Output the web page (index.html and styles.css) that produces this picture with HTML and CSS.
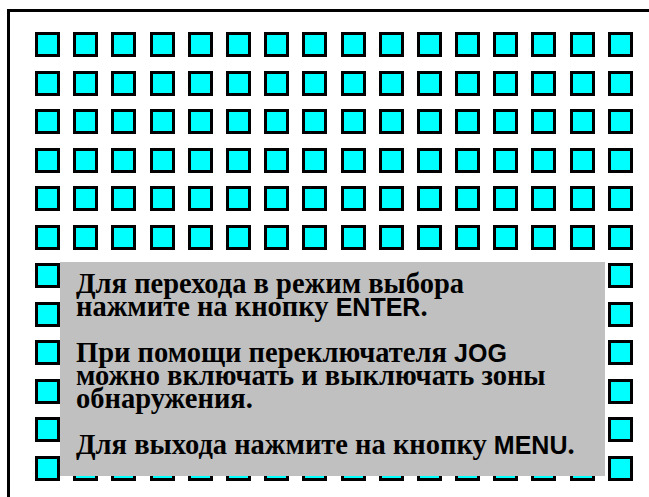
FILE: index.html
```html
<!DOCTYPE html>
<html lang="ru">
<head>
<meta charset="utf-8">
<title>Зоны обнаружения</title>
<link rel="stylesheet" href="styles.css">
</head>
<body>
<div class="frame">
  <div class="zones">
    <span class="zone"></span><span class="zone"></span><span class="zone"></span><span class="zone"></span><span class="zone"></span><span class="zone"></span><span class="zone"></span><span class="zone"></span><span class="zone"></span><span class="zone"></span><span class="zone"></span><span class="zone"></span><span class="zone"></span><span class="zone"></span><span class="zone"></span><span class="zone"></span>
    <span class="zone"></span><span class="zone"></span><span class="zone"></span><span class="zone"></span><span class="zone"></span><span class="zone"></span><span class="zone"></span><span class="zone"></span><span class="zone"></span><span class="zone"></span><span class="zone"></span><span class="zone"></span><span class="zone"></span><span class="zone"></span><span class="zone"></span><span class="zone"></span>
    <span class="zone"></span><span class="zone"></span><span class="zone"></span><span class="zone"></span><span class="zone"></span><span class="zone"></span><span class="zone"></span><span class="zone"></span><span class="zone"></span><span class="zone"></span><span class="zone"></span><span class="zone"></span><span class="zone"></span><span class="zone"></span><span class="zone"></span><span class="zone"></span>
    <span class="zone"></span><span class="zone"></span><span class="zone"></span><span class="zone"></span><span class="zone"></span><span class="zone"></span><span class="zone"></span><span class="zone"></span><span class="zone"></span><span class="zone"></span><span class="zone"></span><span class="zone"></span><span class="zone"></span><span class="zone"></span><span class="zone"></span><span class="zone"></span>
    <span class="zone"></span><span class="zone"></span><span class="zone"></span><span class="zone"></span><span class="zone"></span><span class="zone"></span><span class="zone"></span><span class="zone"></span><span class="zone"></span><span class="zone"></span><span class="zone"></span><span class="zone"></span><span class="zone"></span><span class="zone"></span><span class="zone"></span><span class="zone"></span>
    <span class="zone"></span><span class="zone"></span><span class="zone"></span><span class="zone"></span><span class="zone"></span><span class="zone"></span><span class="zone"></span><span class="zone"></span><span class="zone"></span><span class="zone"></span><span class="zone"></span><span class="zone"></span><span class="zone"></span><span class="zone"></span><span class="zone"></span><span class="zone"></span>
    <span class="zone"></span><span class="zone"></span><span class="zone"></span><span class="zone"></span><span class="zone"></span><span class="zone"></span><span class="zone"></span><span class="zone"></span><span class="zone"></span><span class="zone"></span><span class="zone"></span><span class="zone"></span><span class="zone"></span><span class="zone"></span><span class="zone"></span><span class="zone"></span>
    <span class="zone"></span><span class="zone"></span><span class="zone"></span><span class="zone"></span><span class="zone"></span><span class="zone"></span><span class="zone"></span><span class="zone"></span><span class="zone"></span><span class="zone"></span><span class="zone"></span><span class="zone"></span><span class="zone"></span><span class="zone"></span><span class="zone"></span><span class="zone"></span>
    <span class="zone"></span><span class="zone"></span><span class="zone"></span><span class="zone"></span><span class="zone"></span><span class="zone"></span><span class="zone"></span><span class="zone"></span><span class="zone"></span><span class="zone"></span><span class="zone"></span><span class="zone"></span><span class="zone"></span><span class="zone"></span><span class="zone"></span><span class="zone"></span>
    <span class="zone"></span><span class="zone"></span><span class="zone"></span><span class="zone"></span><span class="zone"></span><span class="zone"></span><span class="zone"></span><span class="zone"></span><span class="zone"></span><span class="zone"></span><span class="zone"></span><span class="zone"></span><span class="zone"></span><span class="zone"></span><span class="zone"></span><span class="zone"></span>
    <span class="zone"></span><span class="zone"></span><span class="zone"></span><span class="zone"></span><span class="zone"></span><span class="zone"></span><span class="zone"></span><span class="zone"></span><span class="zone"></span><span class="zone"></span><span class="zone"></span><span class="zone"></span><span class="zone"></span><span class="zone"></span><span class="zone"></span><span class="zone"></span>
    <span class="zone"></span><span class="zone"></span><span class="zone"></span><span class="zone"></span><span class="zone"></span><span class="zone"></span><span class="zone"></span><span class="zone"></span><span class="zone"></span><span class="zone"></span><span class="zone"></span><span class="zone"></span><span class="zone"></span><span class="zone"></span><span class="zone"></span><span class="zone"></span>
  </div>
  <div class="help">
    <p>Для перехода в режим выбора<br>нажмите на кнопку <span class="key">ENTER</span>.</p>
    <p>При помощи переключателя <span class="key">JOG</span><br>можно включать и выключать зоны<br>обнаружения.</p>
    <p>Для выхода нажмите на кнопку <span class="key">MENU</span>.</p>
  </div>
</div>
</body>
</html>
```
FILE: styles.css
```css
html, body {
  margin: 0;
  padding: 0;
  background: #ffffff;
  overflow: hidden;
  width: 649px;
  height: 497px;
}

/* screen frame: only top and left edges fall inside the view */
.frame {
  position: relative;
  margin: 9px 0 0 7px;
  width: 642px;
  height: 488px;
  border-top: 3px solid #000;
  border-left: 3px solid #000;
  box-sizing: border-box;
  overflow: hidden;
}

.zones {
  display: grid;
  grid-template-columns: repeat(16, 25px);
  grid-auto-rows: 25px;
  column-gap: 13.2px;
  row-gap: 13.5px;
  padding: 20px 0 0 25px;
}

.zone {
  display: block;
  background: #00ffff;
  border: 3px solid #000;
  box-sizing: border-box;
}

/* message panel laid over the zone grid */
.help {
  position: absolute;
  left: 50px;
  top: 250px;
  width: 545px;
  height: 214px;
  box-sizing: border-box;
  background: #c0c0c0;
  padding: 10px 8px 0 16px;
  font-family: "Liberation Serif", "Times New Roman", serif;
  font-weight: bold;
  font-size: 28.5px;
  line-height: 23px;
  color: #000;
  white-space: nowrap;
}

.help p {
  margin: 0 0 23px 0;
}

.key {
  font-family: "Liberation Sans", Arial, sans-serif;
  font-size: 25px;
  line-height: 0;
}
```
